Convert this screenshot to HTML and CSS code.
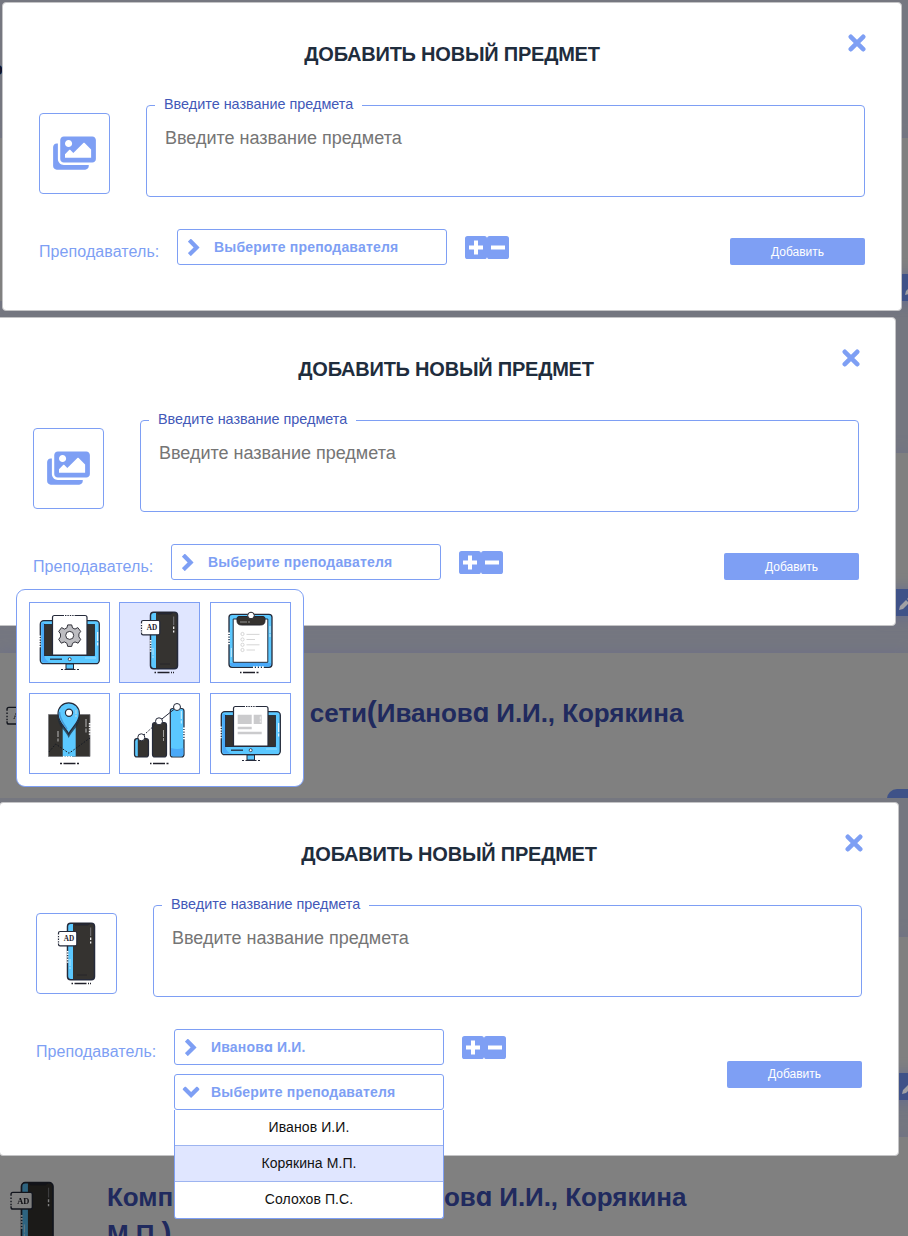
FILE: index.html
```
<!DOCTYPE html>
<html lang="ru">
<head>
<meta charset="utf-8">
<title>Добавить новый предмет</title>
<link rel="stylesheet" href="styles.css">
</head>
<body>
<svg class="sprite" aria-hidden="true">
  <symbol id="close" viewBox="0 0 18 18"><path d="M2.8 2.8 15.2 15.2M15.2 2.8 2.8 15.2" fill="none" stroke="currentColor" stroke-width="4.6" stroke-linecap="round"/></symbol>
  <symbol id="chevron" viewBox="0 0 12 17"><path d="M2.8 2.6 8.6 8.4 2.8 14.2" fill="none" stroke="currentColor" stroke-width="4.2" stroke-linecap="square" stroke-linejoin="miter"/></symbol>
  <symbol id="plus" viewBox="0 0 22 23"><rect width="22" height="23" rx="2.6" fill="currentColor"/><path d="M4 11.5H18M11 4.5V18.5" stroke="#fff" stroke-width="4"/></symbol>
  <symbol id="minus" viewBox="0 0 22 23"><rect width="22" height="23" rx="2.6" fill="currentColor"/><path d="M4 11.5H18" stroke="#fff" stroke-width="4"/></symbol>
  <symbol id="images" viewBox="0 0 576 512"><path fill="currentColor" d="M480 416v16c0 26.5-21.500 48-48 48H48c-26.500 0-48-21.500-48-48V176c0-26.500 21.500-48 48-48h16v208c0 44.100 35.900 80 80 80h336zm96-80V80c0-26.500-21.500-48-48-48H144c-26.500 0-48 21.500-48 48v256c0 26.500 21.500 48 48 48h384c26.500 0 48-21.500 48-48zM256 128c0 26.500-21.500 48-48 48s-48-21.500-48-48 21.500-48 48-48 48 21.500 48 48zm-96 144l55.500-55.500c4.700-4.700 12.300-4.700 17 0L272 256l135.500-135.500c4.700-4.700 12.300-4.700 17 0L512 208v112H160v-48z"/></symbol>
  <symbol id="pencil" viewBox="0 0 14 14"><path d="M1 13l1-4 6-6 3 3-6 6zM9 2l1.500-1.500 3 3L12 5z" fill="currentColor"/></symbol>

  <symbol id="monitor" viewBox="1 1 79 79">
    <rect x="11.300" y="18.700" width="59" height="43" rx="3.500" fill="#5bc8ff" stroke="#252a3a" stroke-width="1.300"/>
    <path d="M12.500 21v37q0 2.500 3 2.500h7q-7-1-7-8V21z" fill="#4aa9f8"/>
    <rect x="15.500" y="22.500" width="50" height="31" fill="#35322f" stroke="#22242c" stroke-width=".8"/>
    <path d="M23.500 53V15.500q0-2 2-2H56q2 0 2 2V53z" fill="#fff" stroke="#252a3a" stroke-width="1.200"/>
    <path d="M15.500 53.500h50" stroke="#252a3a" stroke-width=".9"/>
    <path d="M35 13.500h11" stroke="#fff" stroke-width="1.500" stroke-dasharray="1 1.400"/>
    <path d="M10.700 33.500v12" stroke="#fff" stroke-width="2" stroke-dasharray="1.400 1.200"/>
    <path d="M68.700 30v9m0 1.500v3" stroke="#fff" stroke-width="1"/>
    <path d="M21 57.200h12" stroke="#252a3a" stroke-width="1.300"/>
    <path d="M56 56h11" stroke="#a8e4ff" stroke-width=".8"/>
    <circle cx="40.700" cy="57.200" r="1.500" fill="#fff" stroke="#252a3a" stroke-width=".8"/>
    <path d="M37 62h7.500v5H37z" fill="#5bc8ff" stroke="#252a3a"/>
    <path d="M32 67.500h2m1.500 0h11m1.500 0h2" stroke="#252a3a" stroke-width="1.200"/>
  </symbol>
  <symbol id="gear" viewBox="1 1 79 79">
    <use href="#monitor" x="1" y="1" width="79" height="79"/>
    <g transform="translate(40.700 33.400)">
      <path d="M-2-10.500h4l.8 3 2.500 1.200 2.800-1.500L11-4l-1.800 2.500v3L11 4 8.400 7.800 5.300 6.500 2.800 7.900 2 11h-4l-.8-3.100-2.500-1.400-3.100 1.300L-11 4l1.800-2.500v-3L-11-4l2.900-3.800 2.800 1.500 2.500-1.200z" fill="#bdbdc1" stroke="#33333b" stroke-width="1"/>
      <circle r="4" fill="#fff" stroke="#33333b" stroke-width="1"/>
    </g>
  </symbol>
  <symbol id="news" viewBox="1 1 79 79">
    <use href="#monitor" x="1" y="1" width="79" height="79"/>
    <path d="M27.700 21.700h14V31h-14zm16 0h8V31h-8zm-16 12h14v2.600h-14zm0 5h24v2.600h-24z" fill="#cbcbcd"/>
    <path d="M50.300 23.500v3m0 1v2" stroke="#fff" stroke-width=".8"/>
  </symbol>
  <symbol id="phone" viewBox="1 1 79 79">
    <rect x="31.500" y="10.200" width="27" height="56.500" rx="3.200" fill="#353330" stroke="#252a3a" stroke-width="1.500"/>
    <path d="M34.800 10.900H37v55h-2.300q-2.500 0-2.500-2.800V13.700q0-2.800 2.600-2.800z" fill="#5bc8ff"/>
    <path d="M38 10.500h16l-2 1.600H39zM41 62h10" fill="#252a3a" stroke="#24242a" stroke-width=".8"/>
    <path d="M54.700 14.500v8.500" stroke="#77777b" stroke-width="1"/>
    <path d="M54.700 24.500v2.500m0 1.500v2" stroke="#fff" stroke-width="1.200"/>
    <path d="M31.600 38v13" stroke="#fff" stroke-width="1.800" stroke-dasharray="1.400 1.200"/>
    <path d="M34 46v7m0 1v2" stroke="#d8f4ff" stroke-width=".7"/>
    <rect x="22.500" y="18.500" width="18.300" height="14.300" rx="1.600" fill="#fff" stroke="#252a3a" stroke-width="1.200"/>
    <path d="M22.500 21.500v9" stroke="#fff" stroke-width="2" stroke-dasharray="1.400 1.300"/>
    <text x="33" y="28.300" text-anchor="middle" font-family="Liberation Serif,serif" font-weight="700" font-size="7.200" fill="#20202a">AD</text>
    <path d="M35.500 70.500h1.500m1.500 0h12m1.500 0h1m1 0h1" stroke="#20202a" stroke-width="1.300"/>
  </symbol>
  <symbol id="clip" viewBox="1 1 79 79">
    <rect x="19" y="12.300" width="43" height="53" rx="3" fill="#5bc8ff" stroke="#252a3a" stroke-width="1.300"/>
    <path d="M20 61h41v1q0 2.500-3 2.500H23q-3 0-3-3z" fill="#4aa9f8"/>
    <path d="M23.200 17h34.600v43.300H23.200z" fill="#fff" stroke="#252a3a"/>
    <path d="M29 14.500h24q2 0 2 2v2q0 4.500-4.500 4.500h-19Q27 23 27 18.500v-2q0-2 2-2z" fill="#35322f" stroke="#24242c"/>
    <circle cx="41" cy="13.500" r="3.300" fill="#fff" stroke="#24242c"/>
    <path d="M30 20h7m1 0h2" stroke="#aaa" stroke-width=".8"/>
    <g fill="none" stroke="#ccc" stroke-width=".8"><circle cx="32.500" cy="32" r="1.600"/><circle cx="32.500" cy="37.500" r="1.600"/><circle cx="32.500" cy="42.800" r="1.600"/><circle cx="32.500" cy="48" r="1.600"/><path d="M36.500 32.400h13M36.500 37.500H45M36.500 42.800h13M36.500 48H45"/></g>
    <path d="M19 30.500v12.500" stroke="#fff" stroke-width="2" stroke-dasharray="1.400 1.200"/>
    <path d="M43 65.200h12" stroke="#fff" stroke-width="1.800" stroke-dasharray="1.800 1.200"/>
    <path d="M60 24v7m0 1v3M21.300 46v9" stroke="#dff6ff" stroke-width=".8"/>
    <path d="M30 70.500h1.500m1.500 0h12m1.500 0h2" stroke="#20202a" stroke-width="1.300"/>
  </symbol>
  <symbol id="map" viewBox="1 1 79 79">
    <path d="M19.500 21.500H61v42H19.500z" fill="#353330" stroke="#77777b" stroke-width=".8"/>
    <path d="M33.700 21.500h13v42h-13z" fill="#5bc8ff"/>
    <path d="M20 59l6.700-8L40 60.300 61 45" fill="none" stroke="#151922" stroke-width="1" stroke-dasharray="1.700 1.500"/>
    <path d="M28.500 22C28 34 37 37 39.700 45 43 37 51 34 51 22z" fill="#1d2c3a" opacity=".75"/>
    <path d="M39.700 41C37 34.500 29 30 29 20.500a10.700 10.700 0 0121.400 0C50.400 30 42.500 34.500 39.700 41z" fill="#5bc8ff" stroke="#252a3a" stroke-width="1.200"/>
    <path d="M38 36C35 31 30.500 26 30.500 19" fill="none" stroke="#4797d4" stroke-width="1.500"/>
    <circle cx="40" cy="19.700" r="3.600" fill="#fff" stroke="#252a3a" stroke-width="1.200"/>
    <path d="M47 17v4m0 1v2M57 26v8m0 1.500v4M29 38v6m0 1.500v3" stroke="#ddd" stroke-width=".8"/>
    <path d="M60.800 30v12" stroke="#fff" stroke-width="2" stroke-dasharray="1.400 1.200"/>
    <path d="M34 63.700h9" stroke="#fff" stroke-width="1.500" stroke-dasharray="1.600 1"/>
    <path d="M31 70.500h2m1.500 0h12m1.500 0h2" stroke="#20202a" stroke-width="1.300"/>
  </symbol>
  <symbol id="bars" viewBox="1 1 79 79">
    <g stroke="#252a3a" stroke-width="1.200" fill="#353330"><rect x="15.500" y="45.500" width="14" height="18.500" rx="2.500"/><rect x="33.500" y="29.500" width="14" height="34.500" rx="2.500"/><rect x="51.300" y="15.500" width="13.700" height="48.500" rx="2.500" fill="#5bc8ff"/></g>
    <path d="M17.500 46.200h1.300v17h-1.300q-1.300 0-1.300-1.600V48z" fill="#5bc8ff"/>
    <path d="M52 55q6 2 12.300 0v6q0 2.300-2 2.300h-8.300q-2 0-2-2.300z" fill="#4aa9f8"/>
    <path d="M40 28.300 58 14" stroke="#252a3a"/><path d="M22.300 44.300 40 28.300" stroke="#252a3a" stroke-dasharray="1.800 1.400"/>
    <g fill="#fff" stroke="#252a3a"><circle cx="22.300" cy="44.300" r="3.500"/><circle cx="40" cy="28.300" r="3.500"/><circle cx="58" cy="14" r="3.500"/></g>
    <path d="M62.300 18v8m0 1.500v3" stroke="#e5f8ff" stroke-width=".9"/><path d="M44.500 37v7m0 1v3" stroke="#bbb" stroke-width=".8"/>
    <path d="M65 34.500v12" stroke="#fff" stroke-width="2" stroke-dasharray="1.400 1.200"/>
    <path d="M31 70.500h1.500m1.500 0h12m1.500 0h2" stroke="#20202a" stroke-width="1.300"/>
  </symbol>
</svg>

<section class="screen screen--first">
  <div class="page">
    <p class="page__mark">о</p>
    <div class="card"><span class="card__edit"><svg><use href="#pencil"/></svg></span></div>
  </div>
  <form class="modal">
    <button type="button" class="modal__close" aria-label="Закрыть"><svg><use href="#close"/></svg></button>
    <h2 class="modal__title">ДОБАВИТЬ НОВЫЙ ПРЕДМЕТ</h2>
    <div class="subject">
      <div class="picture"><svg class="picture__empty"><use href="#images"/></svg></div>
      <fieldset class="name"><legend>Введите название предмета</legend><p>Введите название предмета</p></fieldset>
    </div>
    <div class="teacher">
      <span class="teacher__label">Преподаватель:</span>
      <div class="teacher__list"><div class="select"><svg class="select__arrow"><use href="#chevron"/></svg><span>Выберите преподавателя</span></div></div>
      <div class="counter"><svg><use href="#plus"/></svg><svg><use href="#minus"/></svg></div>
      <button type="button" class="submit">Добавить</button>
    </div>
  </form>
</section>

<section class="screen screen--second">
  <div class="page">
    <div class="card"><span class="card__edit"><svg><use href="#pencil"/></svg></span></div>
    <div class="card">
      <svg class="card__icon"><use href="#phone"/></svg>
      <h3 class="card__title">Компьютерные сети<span class="paren">(</span>Иванов<span class="alt">a</span> И.И., Корякина М.П.<span class="paren">)</span></h3>
      <span class="card__edit card__edit--round"></span>
    </div>
  </div>
  <form class="modal">
    <button type="button" class="modal__close" aria-label="Закрыть"><svg><use href="#close"/></svg></button>
    <h2 class="modal__title">ДОБАВИТЬ НОВЫЙ ПРЕДМЕТ</h2>
    <div class="subject">
      <div class="picture"><svg class="picture__empty"><use href="#images"/></svg></div>
      <fieldset class="name"><legend>Введите название предмета</legend><p>Введите название предмета</p></fieldset>
    </div>
    <div class="teacher">
      <span class="teacher__label">Преподаватель:</span>
      <div class="teacher__list"><div class="select"><svg class="select__arrow"><use href="#chevron"/></svg><span>Выберите преподавателя</span></div></div>
      <div class="counter"><svg><use href="#plus"/></svg><svg><use href="#minus"/></svg></div>
      <button type="button" class="submit">Добавить</button>
    </div>
    <div class="picker">
      <svg class="picker__item"><use href="#gear"/></svg>
      <svg class="picker__item picker__item--active"><use href="#phone"/></svg>
      <svg class="picker__item"><use href="#clip"/></svg>
      <svg class="picker__item"><use href="#map"/></svg>
      <svg class="picker__item"><use href="#bars"/></svg>
      <svg class="picker__item"><use href="#news"/></svg>
    </div>
  </form>
</section>

<section class="screen screen--third">
  <div class="page">
    <div class="card"><span class="card__edit"><svg><use href="#pencil"/></svg></span></div>
    <div class="card">
      <svg class="card__icon"><use href="#phone"/></svg>
      <h3 class="card__title">Компьютерные сети<span class="paren">(</span>Иванов<span class="alt">a</span> И.И., Корякина М.П.<span class="paren">)</span></h3>
    </div>
  </div>
  <form class="modal">
    <button type="button" class="modal__close" aria-label="Закрыть"><svg><use href="#close"/></svg></button>
    <h2 class="modal__title">ДОБАВИТЬ НОВЫЙ ПРЕДМЕТ</h2>
    <div class="subject">
      <div class="picture picture--chosen"><svg class="picture__icon"><use href="#phone"/></svg></div>
      <fieldset class="name"><legend>Введите название предмета</legend><p>Введите название предмета</p></fieldset>
    </div>
    <div class="teacher">
      <span class="teacher__label">Преподаватель:</span>
      <div class="teacher__list">
        <div class="select"><svg class="select__arrow"><use href="#chevron"/></svg><span>Иванов<span class="alt">a</span> И.И.</span></div>
        <div class="select"><svg class="select__arrow select__arrow--open"><use href="#chevron"/></svg><span>Выберите преподавателя</span>
          <ul class="options"><li>Иванов И.И.</li><li class="options__active">Корякина М.П.</li><li>Солохов П.С.</li></ul>
        </div>
      </div>
      <div class="counter"><svg><use href="#plus"/></svg><svg><use href="#minus"/></svg></div>
      <button type="button" class="submit">Добавить</button>
    </div>
  </form>
</section>
</body>
</html>
```
FILE: styles.css
```
* { box-sizing: border-box; margin: 0; }
body { width: 908px; height: 1236px; overflow: hidden; font-family: "Liberation Sans", Arial, sans-serif; }
.sprite { position: absolute; width: 0; height: 0; }

.screen { display: grid; grid-template-columns: 908px; overflow: hidden; align-items: start; }
.screen > * { grid-area: 1 / 1; }
.screen--first { height: 317px; }
.screen--second { height: 481px; }
.screen--third { height: 438px; }

/* dimmed page behind the dialog */
.page { display: flex; flex-direction: column; gap: 37px; height: 500px; padding-top: 136px; background: #757780; }
.screen--first .page { padding-top: 60px; gap: 58px; }
.screen--third .page { padding-top: 139px; }
.page__mark { height: 20px; margin-left: -8px; font: 700 18px/18px "Liberation Sans", sans-serif; color: #111428; }
.card { display: flex; position: relative; flex: none; height: 163px; background: #808080; box-shadow: 0 0 12px #6e7088; }
.card__edit { position: absolute; left: 881px; bottom: 0; width: 60px; height: 27px; padding: 8px 17px; background: #3f5288; color: #99a; box-shadow: 0 0 14px #666d8e; }
.card__edit svg { display: block; width: 14px; height: 14px; color: #a0a0a4; }
.screen--first .card__edit { left: 887px; }
.screen--third .card__edit { left: 884px; }
.card__edit--round { left: 887px; border-radius: 10px 0 0 0; box-shadow: none; }
.card__icon { flex: none; width: 92px; height: 92px; margin: 34px 0 0 -18px; filter: brightness(.5); }
.card__title { width: 620px; margin: 42px 0 0 30px; font-size: 26px; line-height: 37px; letter-spacing: -.06px; color: #202a5e; }
.screen--third .card__icon { margin: 35px 0 0 -14px; }
.screen--third .card__title { margin-left: 29px; }
.paren { font-size: 30px; line-height: 1; }
.alt { font-family: Inter, "Liberation Sans", sans-serif; font-feature-settings: "cv11"; line-height: 1; }

.modal { position: relative; width: 900px; padding: 37px 36px 45px; border: 1px solid #c4c4c6; border-radius: 4px; background: #fff; }
.screen--first .modal { margin: 2px 0 0 2px; }
.screen--second .modal { margin-left: -4px; }
.screen--third .modal { margin: 4px 0 0 -1px; }
.modal__close { position: absolute; top: 31px; right: 35.500px; width: 18px; height: 18px; padding: 0; border: 0; background: none; color: #7e9ff4; }
.modal__close svg { display: block; width: 18px; height: 18px; }
.modal__title { height: 28px; font-size: 20px; line-height: 28px; letter-spacing: -.22px; text-align: center; color: #1f2d3d; }

.subject { display: flex; gap: 36px; height: 102px; margin-top: 27px; }
.picture { display: flex; align-items: center; justify-content: center; width: 71px; height: 81px; margin-top: 18px; border: 1px solid #7e9ff4; border-radius: 4px; color: #7e9ff4; }
.picture--chosen { width: 81px; }
.picture__empty { width: 43px; height: 38px; margin-bottom: 2px; }
.picture__icon { width: 79px; height: 79px; }
.name { flex: 1; min-width: 0; height: 101px; margin-top: 1px; padding: 0 18px; border: 1px solid #7e9ff4; border-radius: 4px; }
.name legend { height: 18px; margin-left: -10px; padding: 0 9px; font-size: 14.4px; line-height: 16px; color: #4258b8; }
.name p { margin-top: 13px; font-size: 18px; line-height: 22px; color: #757575; }

.teacher { display: flex; align-items: flex-start; margin-top: 32px; }
.teacher__label { width: 120px; margin: 13px 18px 0 0; font-size: 16px; line-height: 20px; letter-spacing: .08px; color: #7e9ff4; }
.teacher__list { display: flex; flex-direction: column; gap: 9px; width: 270px; }
.select { display: flex; position: relative; align-items: center; height: 36px; padding: 0 10px; border: 1px solid #7e9ff4; border-radius: 3px; font-size: 14px; line-height: 16px; font-weight: 700; letter-spacing: .18px; color: #7e9ff4; white-space: nowrap; }
.select__arrow { width: 12px; height: 17px; margin-right: 14px; }
.select__arrow--open { transform: rotate(90deg); }
.options { position: absolute; top: 35px; left: -1px; z-index: 2; width: 270px; padding: 0; border: 1px solid #7e9ff4; border-top: 0; border-radius: 0 0 3px 3px; background: #fff; list-style: none; font-weight: 400; letter-spacing: .08px; color: #111; text-align: center; }
.options li { height: 36px; line-height: 35px; }
.options li:first-child { height: 35px; }
.options .options__active { height: 37px; border: solid #9db4f0; border-width: 1px 0; background: #e0e6ff; }
.counter { display: flex; margin: 7px 0 0 18px; color: #7e9ff4; }
.counter svg { width: 22px; height: 23px; }
.submit { align-self: center; width: 135px; height: 27px; margin: 9px 0 0 auto; padding: 0; border: 0; border-radius: 2px; background: #7e9ff4; color: #fff; font: 12px "Liberation Sans", sans-serif; }

.picker { display: grid; grid-template-columns: 90px 91px 81px; row-gap: 10px; position: absolute; top: 271px; left: 19px; z-index: 3; width: 288px; height: 198px; padding: 12px; border: 1px solid #7e9ff4; border-radius: 9px; background: #fff; }
.picker__item { width: 81px; height: 81px; border: 1px solid #7e9ff4; }
.picker__item--active { background: #e0e6ff; }
```
